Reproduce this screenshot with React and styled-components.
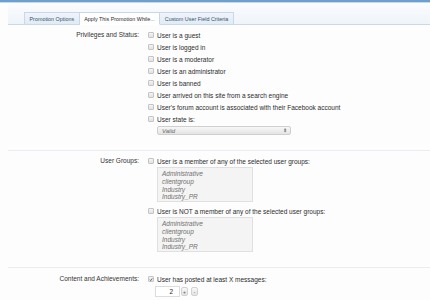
import React from "react";
import styled, { createGlobalStyle } from "styled-components";

const Global = createGlobalStyle`
  html, body { margin: 0; padding: 0; }
  body {
    background: #fdfdfe;
    font-family: "Liberation Sans", Arial, sans-serif;
    font-size: 6.5px;
    color: #2c2c2c;
    width: 430px;
    height: 300px;
    overflow: hidden;
  }
`;

const Page = styled.div`
  display: flex;
  flex-direction: column;
`;

const TopBar = styled.div`
  height: 2px;
  background: #6b9fd2;
  border-bottom: 1px solid #c6daee;
`;

const TabStrip = styled.div`
  margin-left: 8px;
  height: 22px;
  box-sizing: border-box;
  display: flex;
  align-items: flex-end;
  padding-left: 16px;
  background: linear-gradient(#fbfcfe, #eef4fa);
  border-bottom: 1px solid #cbd9e7;
`;

const Tab = styled.div`
  box-sizing: border-box;
  padding: 0 4.5px;
  display: flex;
  align-items: center;
  font-size: 5.4px;
  white-space: nowrap;
  color: ${(p) => (p.$active ? "#2a2a2a" : "#3d4f66")};
  background: ${(p) => (p.$active ? "#ffffff" : "linear-gradient(#eef4fb, #e1ebf6)")};
  border: 1px solid #c9d7e6;
  border-bottom: ${(p) => (p.$active ? "1px solid #ffffff" : "none")};
  margin-bottom: ${(p) => (p.$active ? "-1px" : "0")};
  height: ${(p) => (p.$active ? "13px" : "12px")};
  & + & { border-left: none; }
`;

const Section = styled.div`
  margin-left: 8px;
  display: grid;
  grid-template-columns: 131px 1fr;
  column-gap: 9px;
  padding: ${(p) => p.$top}px 0 ${(p) => p.$bottom}px 0;
  border-bottom: ${(p) => (p.$last ? "none" : "1px solid #e9edf1")};
`;

const Label = styled.div`
  text-align: right;
  line-height: 12px;
  color: #333;
`;

const Controls = styled.div`
  display: flex;
  flex-direction: column;
  align-items: flex-start;
`;

const Row = styled.div`
  height: 12px;
  display: flex;
  align-items: center;
  gap: 3px;
  white-space: nowrap;
  margin-top: ${(p) => p.$mt || 0}px;
`;

const Indented = styled.div`
  margin-left: ${(p) => p.$ml ?? 9}px;
`;

const Box = styled.span`
  width: 6px;
  height: 6px;
  box-sizing: border-box;
  border: 1px solid #c4c4c4;
  border-radius: 1px;
  background: linear-gradient(#f4f4f4, #e2e2e2);
  display: inline-flex;
  align-items: center;
  justify-content: center;
  flex: none;
`;

const Select = styled.div`
  margin-top: 1px;
  width: 134px;
  height: 9px;
  box-sizing: border-box;
  border: 1px solid #cfcfcf;
  border-radius: 2px;
  background: linear-gradient(#f7f7f7, #e4e4e4);
  display: flex;
  align-items: center;
  justify-content: space-between;
  padding: 0 3px 0 4px;
  font-style: italic;
  color: #666;
  font-size: 6px;
`;

const Arrows = styled.span`
  font-style: normal;
  font-size: 5px;
  color: #777;
  line-height: 1;
`;

const ListBox = styled.div`
  width: 96px;
  height: 35px;
  box-sizing: border-box;
  border: 1px solid #e0e0e0;
  background: #f4f4f4;
  padding: 2px 0 0 4px;
  display: flex;
  flex-direction: column;
  font-style: italic;
  color: #707070;
  font-size: 6.5px;
  line-height: 7.8px;
`;

const Spinner = styled.div`
  display: flex;
  align-items: center;
  gap: 1px;
  margin-top: 1px;
`;

const NumInput = styled.div`
  width: 25px;
  height: 11px;
  box-sizing: border-box;
  border: 1px solid #dcdcdc;
  background: #fff;
  display: flex;
  align-items: center;
  justify-content: flex-end;
  padding-right: 6px;
  color: #222;
`;

const SpinBtn = styled.div`
  width: 7px;
  height: 9px;
  box-sizing: border-box;
  border: 1px solid #d2d2d2;
  border-radius: 2px;
  background: linear-gradient(#f8f8f8, #e3e3e3);
  display: flex;
  align-items: center;
  justify-content: center;
  font-size: 5px;
  color: #555;
  margin-left: ${(p) => p.$ml || 0}px;
`;

const Check = ({ checked }) => (
  <Box>
    {checked && (
      <svg width="5" height="5" viewBox="0 0 10 10">
        <path d="M2 5.5 L4.2 7.8 L8.3 2.2" fill="none" stroke="#444" strokeWidth="1.8" />
      </svg>
    )}
  </Box>
);

const Option = ({ children, checked, mt }) => (
  <Row $mt={mt}>
    <Check checked={checked} />
    <span>{children}</span>
  </Row>
);

const groups = ["Administrative", "clientgroup", "Industry", "Industry_PR"];

const GroupList = () => (
  <Indented>
    <ListBox>
      {groups.map((g) => (
        <span key={g}>{g}</span>
      ))}
    </ListBox>
  </Indented>
);

export default function App() {
  return (
    <Page>
      <Global />
      <TopBar />
      <TabStrip>
        <Tab>Promotion Options</Tab>
        <Tab $active>Apply This Promotion While...</Tab>
        <Tab>Custom User Field Criteria</Tab>
      </TabStrip>

      <Section $top={4} $bottom={15}>
        <Label>Privileges and Status:</Label>
        <Controls>
          <Option>User is a guest</Option>
          <Option>User is logged in</Option>
          <Option>User is a moderator</Option>
          <Option>User is an administrator</Option>
          <Option>User is banned</Option>
          <Option>User arrived on this site from a search engine</Option>
          <Option>User's forum account is associated with their Facebook account</Option>
          <Option>User state is:</Option>
          <Indented>
            <Select>
              <span>Valid</span>
              <Arrows>⬍</Arrows>
            </Select>
          </Indented>
        </Controls>
      </Section>

      <Section $top={4} $bottom={15}>
        <Label>User Groups:</Label>
        <Controls>
          <Option>User is a member of any of the selected user groups:</Option>
          <GroupList />
          <Option mt={3}>User is NOT a member of any of the selected user groups:</Option>
          <GroupList />
        </Controls>
      </Section>

      <Section $top={5} $bottom={0} $last>
        <Label>Content and Achievements:</Label>
        <Controls>
          <Option checked>User has posted at least X messages:</Option>
          <Indented $ml={7}>
            <Spinner>
              <NumInput>2</NumInput>
              <SpinBtn>+</SpinBtn>
              <SpinBtn $ml={2}>-</SpinBtn>
            </Spinner>
          </Indented>
        </Controls>
      </Section>
    </Page>
  );
}
